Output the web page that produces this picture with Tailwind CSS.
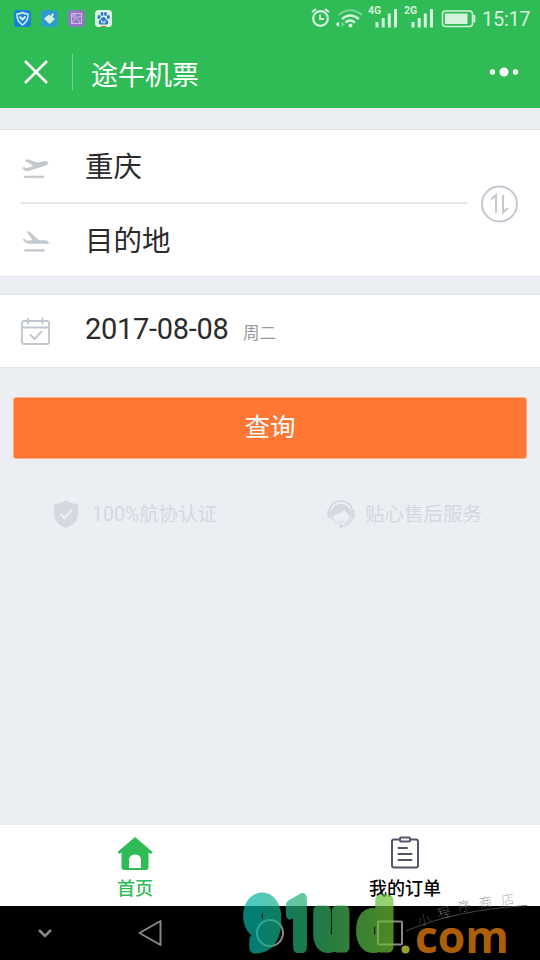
<!DOCTYPE html>
<html lang="zh-CN">
<head>
<meta charset="utf-8">
<title>途牛机票</title>
<script src="https://cdn.jsdelivr.net/npm/@tailwindcss/browser@4"></script>
</head>
<body class="font-['Roboto','Noto_Sans_CJK_SC',sans-serif]">
<div class="relative w-[540px] h-[960px] overflow-hidden bg-[#ebeff4] flex flex-col">
  <header class="h-[108px] shrink-0 bg-[#2fbc56] text-white flex flex-col">
    <div class="h-[37px] flex items-center justify-between pl-[14px] pr-[9px]">
      <div class="flex items-center gap-[10px]">
        <svg class="size-[17px]" viewBox="0 0 17 17"><rect width="17" height="17" rx="3.5" fill="#1683d8"/><path d="M8.5 2.5Q11 4 14 4Q14.5 11 8.5 15Q2.500 11 3 4Q6 4 8.500 2.500Z" fill="none" stroke="#d5eef0" stroke-width="1.5"/><path d="M5.500 6.500L8.500 9.500L11.500 6.500" fill="none" stroke="#d5eef0" stroke-width="2"/></svg>
        <svg class="size-[17px]" viewBox="0 0 17 17"><rect width="17" height="17" rx="3.500" fill="#2f9bc9"/><path d="M3 8.500L8 4.500L9.500 6L11.500 3L13 4.500L11.500 7L14 9L8.500 14Z" fill="#d5f0e0"/></svg>
        <svg class="size-[17px]" viewBox="0 0 17 17"><rect width="17" height="17" rx="3.500" fill="#9277c2"/><g fill="none" stroke="#cdbde4"><rect x="3.500" y="3.500" width="10" height="10"/><circle cx="6" cy="6" r="1.500"/><path d="M4 13Q6 8 13 6M9 9Q11 10 12 13"/></g></svg>
        <svg class="size-[17px]" viewBox="0 0 17 17"><rect width="17" height="17" rx="3.500" fill="#d8f2df"/><g fill="#2b77c5"><ellipse cx="4" cy="7" rx="1.500" ry="2"/><ellipse cx="7" cy="4" rx="1.400" ry="2"/><ellipse cx="10.500" cy="4" rx="1.400" ry="2"/><ellipse cx="13.300" cy="7" rx="1.500" ry="2"/><path d="M8.500 7C10.500 7 11 9.500 12.500 10.500C14 12.500 13 14.500 11 14.500H6C3.500 14.500 3 12 4.500 10.500C6 9.500 6.500 7 8.500 7Z"/></g><path d="M6.500 10v3M8 11v2h2v-3" stroke="#d8f2df" fill="none"/><path d="M6 16.500h5" stroke="#d46c38"/></svg>
      </div>
      <div class="flex items-center text-[#d5f2dd]">
        <svg class="w-[170px] h-[30px]" viewBox="308 4 170 30" fill="none" stroke="currentColor">
          <circle cx="320.500" cy="18.500" r="7.300" stroke-width="2.200"/><path d="M320 14.500V19H324M312 12L316 9M325 9L329 12" stroke-width="1.900"/>
          <path d="M338.500 15Q350 5.500 362 15" stroke="#7bd397" stroke-width="2"/><path d="M342 19Q350 12 359 19M345.500 22.500Q350 18.500 355 22.500" stroke-width="2.400"/><circle cx="350.500" cy="25.500" r="2" fill="currentColor" stroke="none"/><path d="M339 21.500V27L335.500 24.300Z" fill="currentColor" stroke="none"/><path d="M341.500 21.500V27L345 24.300Z" fill="#7bd397" stroke="none"/>
          <path d="M377 22V27.500M383.200 18V27.500M389.300 13.500V27.500M395.500 9V27.500M413 22V27.500M419.200 18V27.500M425.300 13.500V27.500M431.500 9V27.500" stroke-width="3"/>
          <rect x="442.500" y="11" width="30" height="15.500" rx="3" stroke-width="1.500"/><rect x="445" y="13.500" width="22.500" height="10.500" fill="currentColor" stroke="none"/><path d="M474.300 15V22.500" stroke-width="2"/>
          <g fill="currentColor" stroke="none" font-family="Roboto" font-size="10.500" font-weight="700"><text x="368" y="13.500">4G</text><text x="404" y="13.500">2G</text></g>
        </svg>
        <span class="relative top-px ml-[4px] text-[20px] leading-[37px] w-[49px] tracking-[-0.300px] whitespace-nowrap">15:17</span>
      </div>
    </div>
    <div class="h-[71px] flex items-center pl-[24px] pr-[21px] pb-[2px]">
      <svg class="size-[24px]" viewBox="0 0 24 24" fill="none" stroke="white" stroke-width="2.500"><path d="M1 1L23 23M23 1L1 23"/></svg>
      <div class="w-px h-[36px] bg-white/35 ml-[24px]"></div>
      <h1 class="ml-[18px] pt-[8px] text-[27px] leading-[40px] font-normal">途牛机票</h1>
      <svg class="ml-auto w-[30px] h-[12px]" viewBox="0 0 30 12" fill="white"><circle cx="3.500" cy="6" r="2.700"/><circle cx="15" cy="6" r="4.500"/><circle cx="26.500" cy="6" r="2.700"/></svg>
    </div>
  </header>

  <main class="flex-1 flex flex-col pt-[21px] text-[#2b2b2b]">
    <section class="h-[148px] bg-white border-y-[1px] border-[#e0e3e6] flex items-center">
      <div class="w-[446px] ml-[21px] h-full flex flex-col">
        <div class="h-[74px] flex items-center border-b-2 border-[#e3e5e7] pt-[3px]">
          <svg class="w-[28px] h-[24px]" viewBox="0 0 28 24" fill="#c3c8d0" stroke="#c3c8d0" stroke-width=".6"><path d="M4 4.500L6 3.500L17 7L23 5.500Q27 5 27 7Q27 8.500 24 9.500L6 15Q4 15.500 1.500 12L3 11.500L6 12.500L13 9.800Z"/><rect x="3" y="20" width="20" height="1.700" rx=".8"/></svg>
          <span class="ml-[36px] text-[28.500px] leading-[42px]">重庆</span>
        </div>
        <div class="flex-1 flex items-center pt-[4px]">
          <svg class="w-[28px] h-[26px]" viewBox="0 0 28 26" fill="#c3c8d0" stroke="#c3c8d0" stroke-width=".6"><path d="M6 2.500L8.500 3L18 11.500L24 11.500Q28 12 27.700 14.500H9Q4 14.500 2 10.500L3 10L6 12L12 11.500Z"/><rect x="3.500" y="20.500" width="20" height="1.700" rx=".8"/></svg>
          <span class="ml-[36px] text-[28.500px] leading-[42px]">目的地</span>
        </div>
      </div>
      <svg class="ml-[13px] mt-[2px] w-[38px] h-[38px]" viewBox="0 0 38 38" fill="none" stroke="#c3c8d0" stroke-width="2"><circle cx="19.500" cy="19" r="17.500"/><path d="M11 14.500L16 10V28M23 10V27.500L28 23" stroke-width="1.900"/></svg>
    </section>

    <section class="mt-[17px] h-[74px] bg-white border-y-[1px] border-[#e0e3e6] flex items-center pl-[21px]">
      <svg class="w-[29px] h-[28px]" viewBox="0 0 29 28" fill="none" stroke="#c3c8d0" stroke-width="1.900" stroke-linecap="round" stroke-linejoin="round"><rect x="1" y="4" width="27" height="23" rx="2"/><path d="M1 10.500H28M7 1.500V6.500M21.500 1.500V6.500M9.500 18L13.500 22L20.500 14.500"/></svg>
      <span class="ml-[35px] text-[29px] leading-[40px] relative -top-[2px] w-[144px] tracking-[-0.300px] whitespace-nowrap">2017-08-08</span>
      <span class="ml-[14px] text-[16.500px] leading-[24px] text-[#999] relative top-[3px]">周二</span>
    </section>

    <button class="mt-[29px] mx-[13px] h-[62px] rounded-[3px] bg-[#ff7733] border border-[#f9ac86] text-white text-[25.500px] leading-[38px] pb-[2px]">查询</button>

    <div class="mt-[37px] h-[36px] flex items-center text-[19.500px] leading-[30px] text-[#d4d8df]">
      <svg class="ml-[54px] w-[24px] h-[28px]" viewBox="0 0 24 28"><path d="M12 0Q17 4 24 4V15Q23 24 12 28Q1 24 0 15V4Q7 4 12 0Z" fill="#d4d8df"/><path d="M6.500 14L10.500 18L18 10" fill="none" stroke="#ebeff4" stroke-width="2.400"/></svg>
      <span class="ml-[14px] w-[126px] whitespace-nowrap relative top-px">100%航协认证</span>
      <svg class="ml-[109px] w-[28px] h-[28px]" viewBox="0 0 28 28"><path d="M2.500 11C4 -2.500 24 -2.500 25.500 11" fill="none" stroke="#d4d8df" stroke-width="1.700"/><rect x="0.300" y="9.500" width="3.500" height="9" rx="1.700" fill="#d4d8df"/><rect x="24.200" y="9.500" width="3.500" height="9" rx="1.700" fill="#d4d8df"/><path d="M4.500 19C4 16 4 14 4.500 11C6 1.500 22 1.500 23.500 11C24 14 24 16 23.500 19C22 17 22.500 14 20 13Q18 12 17.500 9.500C15 13 10 14 8 14.500C6 15 6.500 18 4.500 19Z" fill="#d4d8df"/><path d="M5 18Q7 22.500 11 24M23 18Q21.500 22.500 17 24M25.500 18Q23.500 25.500 15 26.500" fill="none" stroke="#d4d8df" stroke-width="1.200"/><path d="M10 20.500Q14 22 18 20.500Q14 24.500 10 20.500Z" fill="#d4d8df"/><circle cx="14" cy="26" r="1.900" fill="#d4d8df"/></svg>
      <span class="ml-[10px] whitespace-nowrap relative top-px">贴心售后服务</span>
    </div>
  </main>

  <nav class="h-[81px] shrink-0 bg-white grid grid-cols-2 text-[18px] leading-[26px] text-black">
    <div class="flex flex-col items-center pt-[11px] text-[#2fbc56]">
      <svg class="w-[36px] h-[36px]" viewBox="0 0 36 36"><path d="M18 1L35.500 16L34 18L31.500 16.500V31Q31.500 34 28.500 34H7.500Q4.500 34 4.500 31V16.500L2 18L0.500 16Z" fill="#2fbc56"/><path d="M12 32V24.500Q12 18.500 18 18.500Q24 18.500 24 24.500V32Z" fill="white"/></svg>
      <span class="mt-[4px] font-medium">首页</span>
    </div>
    <div class="flex flex-col items-center pt-[11px]">
      <svg class="w-[30px] h-[36px]" viewBox="0 0 30 36" fill="none" stroke="#56536a" stroke-width="2" stroke-linecap="round"><rect x="2" y="3.500" width="26" height="28" rx="2"/><rect x="10" y="1.500" width="10" height="4" rx="1" fill="white"/><path d="M8.500 12H17M8.500 18H21.500M8.500 24H21.500"/></svg>
      <span class="mt-[4px] font-medium">我的订单</span>
    </div>
  </nav>

  <footer class="h-[54px] shrink-0 bg-black">
    <svg class="w-[540px] h-[54px]" viewBox="0 906 540 54" fill="none" stroke="#888" stroke-width="2"><path d="M39 930L45 936L51 930" stroke-width="2.500"/><path d="M139.500 933L160.500 921V945Z" stroke-linejoin="round"/><circle cx="270" cy="933" r="13"/><rect x="378" y="921.500" width="24" height="23" rx="1"/></svg>
  </footer>

  <svg class="absolute left-0 top-[880px] w-[540px] h-[80px] overflow-visible pointer-events-none" viewBox="0 880 540 80">
    <defs><linearGradient id="brand" gradientUnits="userSpaceOnUse" x1="243" y1="0" x2="393" y2="0"><stop offset="0" stop-color="#00b4aa"/><stop offset=".5" stop-color="#2fae67"/><stop offset="1" stop-color="#72c234"/></linearGradient>
    <mask id="letters" maskUnits="userSpaceOnUse" x="230" y="880" width="180" height="80"><g fill="white" stroke="white" stroke-width="12" stroke-linejoin="round" text-anchor="middle" font-family="Roboto" font-weight="700">
      <text transform="translate(262.500 947) scale(.87 1)" font-size="66">9</text>
      <text transform="translate(298.500 947) scale(.64 1)" font-size="67">1</text>
      <text transform="translate(331.500 947) scale(.85 1)" font-size="69" stroke-width="11">u</text>
      <text transform="translate(375.500 947) scale(.91 1)" font-size="63" stroke-width="11">d</text>
    </g></mask></defs>
    <rect x="230" y="880" width="180" height="80" fill="url(#brand)" mask="url(#letters)" opacity=".7"/>
    <circle cx="405.500" cy="949.500" r="4" fill="#96a02a"/>
    <text x="415" y="953" font-family="Open Sans" font-size="45" font-weight="700" textLength="94" lengthAdjust="spacingAndGlyphs" fill="#ac5e0a">com</text>
    <path d="M406 931Q455 910 527 905.500" fill="none" stroke="#555" stroke-width=".8"/>
    <g font-family="Noto Sans CJK SC" font-weight="100" font-size="13" fill="#808080"><text transform="translate(419 926) rotate(-15)">小</text><text transform="translate(439 919) rotate(-15)">程</text><text transform="translate(459 912) rotate(-12)">序</text><text transform="translate(480 908) rotate(-10)">商</text><text transform="translate(502 905) rotate(-8)">店</text></g>
  </svg>
</div>
</body>
</html>
